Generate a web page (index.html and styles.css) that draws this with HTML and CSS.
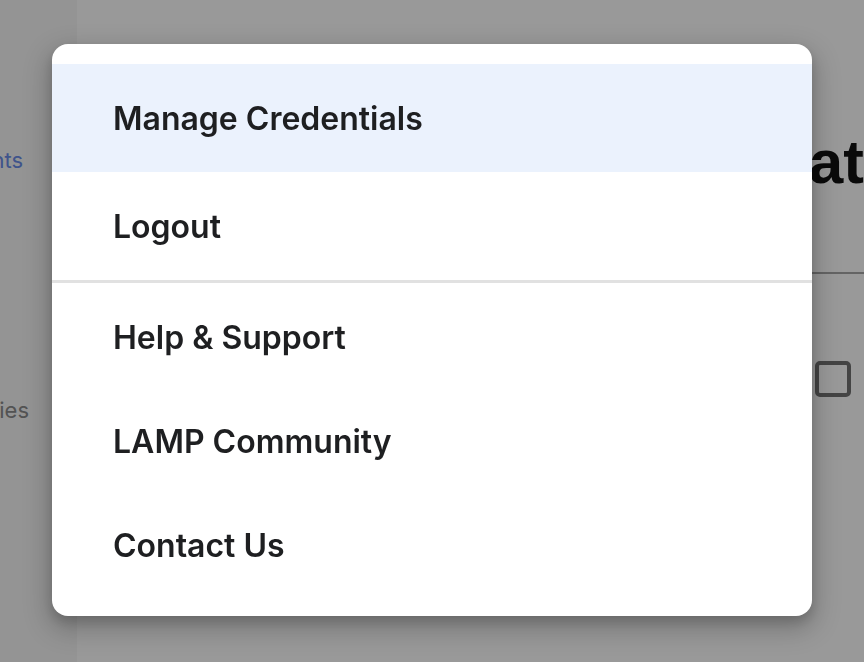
FILE: index.html
```html
<!DOCTYPE html>
<html lang="en">
<head>
<meta charset="utf-8">
<title>Menu</title>
<link rel="stylesheet" href="styles.css">
</head>
<body>
<div class="app">
  <nav class="sidebar">
    <div class="nav-item nav-link"><span>Participants</span></div>
    <div class="nav-item nav-muted"><span>Activities</span></div>
  </nav>
  <main class="main">
    <h1 class="title">at</h1>
    <hr class="rule">
    <div class="checkbox"></div>
  </main>
</div>
<div class="scrim"></div>
<div class="menu" role="menu">
  <div class="menu-item active" role="menuitem">Manage Credentials</div>
  <div class="menu-item" role="menuitem">Logout</div>
  <div class="divider"></div>
  <div class="menu-item short" role="menuitem">Help &amp; Support</div>
  <div class="menu-item short" role="menuitem">LAMP Community</div>
  <div class="menu-item short" role="menuitem">Contact Us</div>
</div>
</body>
</html>
```
FILE: styles.css
```css
* { box-sizing: border-box; }
html, body { margin: 0; padding: 0; width: 864px; height: 662px; overflow: hidden; }
body { font-family: Inter, "Noto Sans", sans-serif; background: #ffffff; }

.app { display: flex; height: 662px; }
.sidebar {
  width: 78px;
  background: #f7f7f7;
  display: flex;
  flex-direction: column;
  padding-top: 142px;
  overflow: hidden;
}
.nav-item {
  width: 23px;
  display: flex;
  justify-content: flex-end;
  font-size: 22px;
  line-height: 36px;
  white-space: nowrap;
}
.nav-link { color: #6a8ce8; }
.nav-muted { color: #8a8a8a; margin-top: 214px; width: 29px; }

.main { flex: 1; position: relative; background: #ffffff; }
.title {
  margin: 126px 0 0 732px;
  font-family: "Liberation Sans", Arial, sans-serif;
  font-size: 62px;
  font-weight: 700;
  line-height: 72px;
  color: #111;
}
.rule { margin: 74px 0 0 700px; border: 0; height: 2px; background: #a7a7a7; }
.checkbox {
  margin: 87px 0 0 738px;
  width: 36px; height: 36px;
  border: 4px solid #727272;
  border-radius: 5px;
}

.scrim { position: fixed; inset: 0; background: rgba(0,0,0,0.4); }

.menu {
  position: absolute;
  left: 52px; top: 44px;
  width: 760px; height: 572px;
  background: #fff;
  border-radius: 16px;
  padding: 20px 0 19px;
  box-shadow: 0 10px 26px 4px rgba(0,0,0,0.22), 0 6px 12px rgba(0,0,0,0.14);
  display: flex;
  flex-direction: column;
}
.menu-item {
  height: 108px;
  display: flex;
  align-items: center;
  padding-left: 61px;
  font-size: 32px;
  font-weight: 600;
  color: #1e1f21;
}
.menu-item.short { height: 104px; }
.menu-item.active { background: #ebf2fd; }
.divider { height: 3px; background: #e1e1e1; margin-bottom: 2px; }
```
